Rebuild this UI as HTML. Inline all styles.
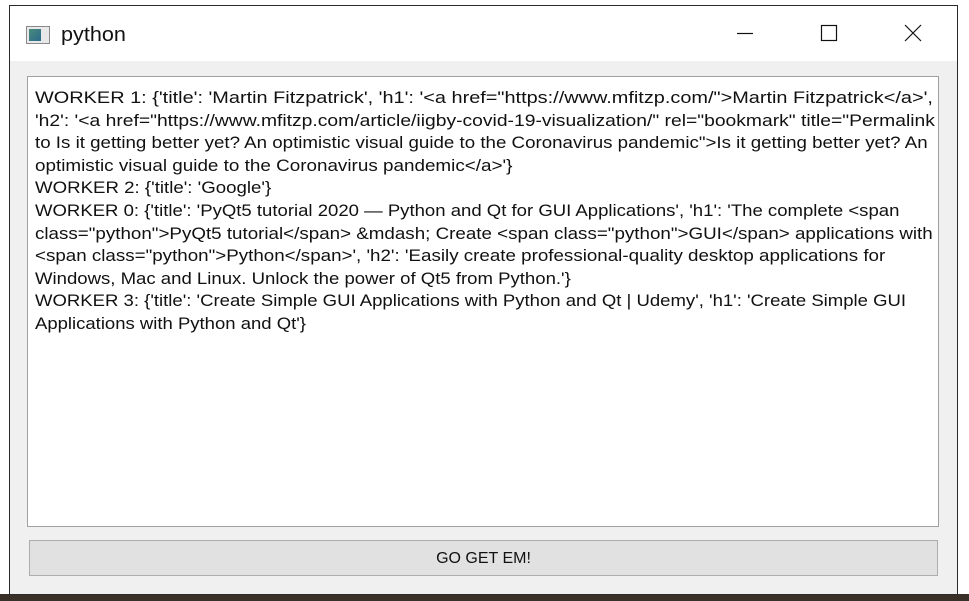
<!DOCTYPE html>
<html><head><meta charset="utf-8"><style>
body{margin:0;width:969px;height:601px;background:#fff;position:relative;overflow:hidden;font-family:"Liberation Sans",sans-serif}
.win{position:absolute;left:9px;top:5px;width:947px;height:588px;border:1px solid #2a2a2a;background:#f0f0f0}
.bottom{position:absolute;left:0;top:594px;width:969px;height:7px;background:#3a3028}
.title{position:absolute;left:0;top:0;width:947px;height:55px;background:#fff}
.title .t{position:absolute;left:51px;top:18px;font-size:20px;color:#111;transform:scaleX(1.08);transform-origin:left}
.icon{position:absolute;left:16px;top:20px;width:22px;height:16px;border:1px solid #8a8a8a;background:#e8e8e8}
.icon i{position:absolute;left:2px;top:2px;width:12px;height:12px;background:linear-gradient(135deg,#4a8a7a,#2a6a8a)}
.tb{position:absolute;left:17px;top:70px;width:910px;height:449px;background:#fff;border:1px solid #a0a0a0;overflow:hidden}
.txt{position:absolute;left:7px;top:10px;font-size:17px;line-height:22.6px;color:#111;white-space:pre}
.txt span{display:block;width:max-content;transform:scaleX(1.14);transform-origin:left top}
.btn{position:absolute;left:19px;top:534px;width:907px;height:34px;background:#e1e1e1;border:1px solid #adadad;text-align:center;line-height:36px;font-size:16px;color:#111}
</style></head><body>
<div class="bottom"></div>
<div class="win">
<div class="title"><div class="icon"><i></i></div><div class="t">python</div>
<svg style="position:absolute;left:725px;top:18px" width="20" height="20"><path d="M2 9.5H18" stroke="#111" stroke-width="1.2"/></svg>
<svg style="position:absolute;left:809px;top:18px" width="20" height="20"><rect x="2.5" y="1.5" width="15" height="15" fill="none" stroke="#111" stroke-width="1.2"/></svg>
<svg style="position:absolute;left:893px;top:18px" width="20" height="20"><path d="M2 1L18 17M18 1L2 17" stroke="#111" stroke-width="1.2"/></svg>
</div>
<div class="tb"><div class="txt" id="t"><span data-w="898">WORKER 1: {'title': 'Martin Fitzpatrick', 'h1': '&lt;a href="https://www.mfitzp.com/"&gt;Martin Fitzpatrick&lt;/a&gt;',</span><span data-w="900">'h2': '&lt;a href="https://www.mfitzp.com/article/iigby-covid-19-visualization/" rel="bookmark" title="Permalink</span><span data-w="893">to Is it getting better yet? An optimistic visual guide to the Coronavirus pandemic"&gt;Is it getting better yet? An</span><span data-w="477">optimistic visual guide to the Coronavirus pandemic&lt;/a&gt;'}</span><span data-w="236">WORKER 2: {'title': 'Google'}</span><span data-w="864">WORKER 0: {'title': 'PyQt5 tutorial 2020 — Python and Qt for GUI Applications', 'h1': 'The complete &lt;span</span><span data-w="898">class="python"&gt;PyQt5 tutorial&lt;/span&gt; &amp;mdash; Create &lt;span class="python"&gt;GUI&lt;/span&gt; applications with</span><span data-w="850">&lt;span class="python"&gt;Python&lt;/span&gt;', 'h2': 'Easily create professional-quality desktop applications for</span><span data-w="536">Windows, Mac and Linux. Unlock the power of Qt5 from Python.'}</span><span data-w="871">WORKER 3: {'title': 'Create Simple GUI Applications with Python and Qt | Udemy', 'h1': 'Create Simple GUI</span><span data-w="271">Applications with Python and Qt'}</span></div></div>
<div class="btn">GO GET EM!</div>
</div>
<script>
document.querySelectorAll('#t span').forEach(function(s){var w=s.offsetWidth;if(w)s.style.transform='scaleX('+(s.dataset.w/w)+')';});
</script>
</body></html>
